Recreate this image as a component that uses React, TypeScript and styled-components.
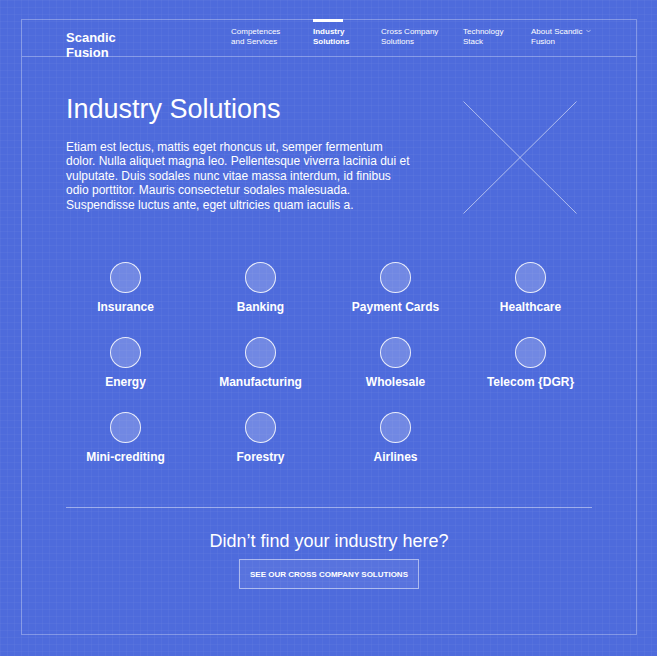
import React from "react";
import styled, { createGlobalStyle } from "styled-components";

const GlobalStyle = createGlobalStyle`
  html, body {
    margin: 0;
    padding: 0;
    background-color: #4e6bdc;
    background-image:
      linear-gradient(rgba(255,255,255,0.03) 1px, transparent 1px),
      linear-gradient(90deg, rgba(255,255,255,0.03) 1px, transparent 1px);
    background-size: 7px 7px;
    font-family: "Liberation Sans", Arial, sans-serif;
    color: #fff;
  }
  * { box-sizing: border-box; }
`;

const Page = styled.div`
  width: 657px;
  height: 656px;
  padding: 19px 21px 0 21px;
`;

const Frame = styled.div`
  width: 616px;
  height: 616px;
  border: 1px solid rgba(255, 255, 255, 0.3);
  display: flex;
  flex-direction: column;
`;

const Header = styled.header`
  height: 37px;
  border-bottom: 1px solid rgba(255, 255, 255, 0.3);
  padding: 7px 44px 0 44px;
  display: flex;
  justify-content: space-between;
  align-items: flex-start;
`;

const Logo = styled.div`
  margin-top: 3px;
  font-size: 13px;
  line-height: 15px;
  font-weight: 700;
  width: 60px;
`;

const Nav = styled.nav`
  display: flex;
  align-items: flex-start;
`;

const NavItem = styled.div<{ $w?: number; $active?: boolean }>`
  position: relative;
  width: ${(p) => (p.$w ? `${p.$w}px` : "auto")};
  font-size: 8px;
  line-height: 9.5px;
  font-weight: ${(p) => (p.$active ? 700 : 400)};
  color: #fff;
`;

const ActiveBar = styled.span`
  position: absolute;
  left: 0;
  top: -8px;
  width: 30px;
  height: 3px;
  background: #fff;
`;

const Chevron = styled.svg`
  margin-left: 3px;
  vertical-align: 1px;
`;

const Main = styled.main`
  padding: 0 44px;
  display: flex;
  flex-direction: column;
`;

const Hero = styled.section`
  margin-top: 36px;
  display: flex;
  justify-content: space-between;
  align-items: flex-start;
`;

const HeroText = styled.div`
  width: 346px;
`;

const Title = styled.h1`
  margin: 0;
  font-size: 27px;
  line-height: 32px;
  font-weight: 400;
`;

const Lead = styled.p`
  margin: 14.5px 0 0 0;
  font-size: 12px;
  line-height: 14.5px;
`;

const Placeholder = styled.svg`
  margin-top: 8px;
  margin-right: 15px;
  display: block;
`;

const IndustryGrid = styled.div`
  margin: 48px -8px 0 -8px;
  display: grid;
  grid-template-columns: repeat(4, 135px);
  row-gap: 23px;
`;

const Industry = styled.div`
  display: flex;
  flex-direction: column;
  align-items: center;
`;

const Circle = styled.div`
  width: 31px;
  height: 31px;
  border-radius: 50%;
  border: 1px solid rgba(255, 255, 255, 0.85);
  background: rgba(255, 255, 255, 0.2);
`;

const Label = styled.div`
  margin-top: 7px;
  font-size: 12px;
  line-height: 14px;
  font-weight: 700;
  white-space: nowrap;
`;

const Divider = styled.hr`
  margin: 43px 0 0 0;
  border: 0;
  border-top: 1px solid rgba(255, 255, 255, 0.45);
  height: 0;
`;

const Cta = styled.section`
  display: flex;
  flex-direction: column;
  align-items: center;
`;

const CtaTitle = styled.h2`
  margin: 22px 0 0 0;
  font-size: 18px;
  line-height: 22px;
  font-weight: 400;
`;

const CtaButton = styled.button`
  margin-top: 7px;
  width: 180px;
  height: 30px;
  border: 1px solid rgba(255, 255, 255, 0.5);
  background: rgba(255, 255, 255, 0.06);
  color: #fff;
  font-family: "Liberation Sans", Arial, sans-serif;
  font-size: 8px;
  font-weight: 700;
  text-transform: uppercase;
  padding: 0;
  cursor: pointer;
`;

const industries = [
  "Insurance",
  "Banking",
  "Payment Cards",
  "Healthcare",
  "Energy",
  "Manufacturing",
  "Wholesale",
  "Telecom {DGR}",
  "Mini-crediting",
  "Forestry",
  "Airlines",
];

export default function App() {
  return (
    <>
      <GlobalStyle />
      <Page>
        <Frame>
          <Header>
            <Logo>Scandic Fusion</Logo>
            <Nav>
              <NavItem $w={82}>
                Competences
                <br />
                and Services
              </NavItem>
              <NavItem $w={68} $active>
                <ActiveBar />
                Industry
                <br />
                Solutions
              </NavItem>
              <NavItem $w={82}>
                Cross Company
                <br />
                Solutions
              </NavItem>
              <NavItem $w={68}>
                Technology
                <br />
                Stack
              </NavItem>
              <NavItem $w={61}>
                About Scandic
                <Chevron width="5" height="4" viewBox="0 0 5 4">
                  <path d="M0.3 0.8 L2.5 3 L4.7 0.8" fill="none" stroke="rgba(255,255,255,0.8)" strokeWidth="0.7" />
                </Chevron>
                <br />
                Fusion
              </NavItem>
            </Nav>
          </Header>
          <Main>
            <Hero>
              <HeroText>
                <Title>Industry Solutions</Title>
                <Lead>
                  Etiam est lectus, mattis eget rhoncus ut, semper fermentum dolor. Nulla aliquet magna leo.
                  Pellentesque viverra lacinia dui et vulputate. Duis sodales nunc vitae massa interdum, id finibus
                  odio porttitor. Mauris consectetur sodales malesuada. Suspendisse luctus ante, eget ultricies quam
                  iaculis a.
                </Lead>
              </HeroText>
              <Placeholder width="114" height="113" viewBox="0 0 114 113">
                <line x1="0.5" y1="0.5" x2="113.5" y2="112.5" stroke="rgba(255,255,255,0.55)" strokeWidth="1" />
                <line x1="113.5" y1="0.5" x2="0.5" y2="112.5" stroke="rgba(255,255,255,0.55)" strokeWidth="1" />
              </Placeholder>
            </Hero>
            <IndustryGrid>
              {industries.map((name) => (
                <Industry key={name}>
                  <Circle />
                  <Label>{name}</Label>
                </Industry>
              ))}
            </IndustryGrid>
            <Divider />
            <Cta>
              <CtaTitle>Didn’t find your industry here?</CtaTitle>
              <CtaButton>See our cross company solutions</CtaButton>
            </Cta>
          </Main>
        </Frame>
      </Page>
    </>
  );
}
